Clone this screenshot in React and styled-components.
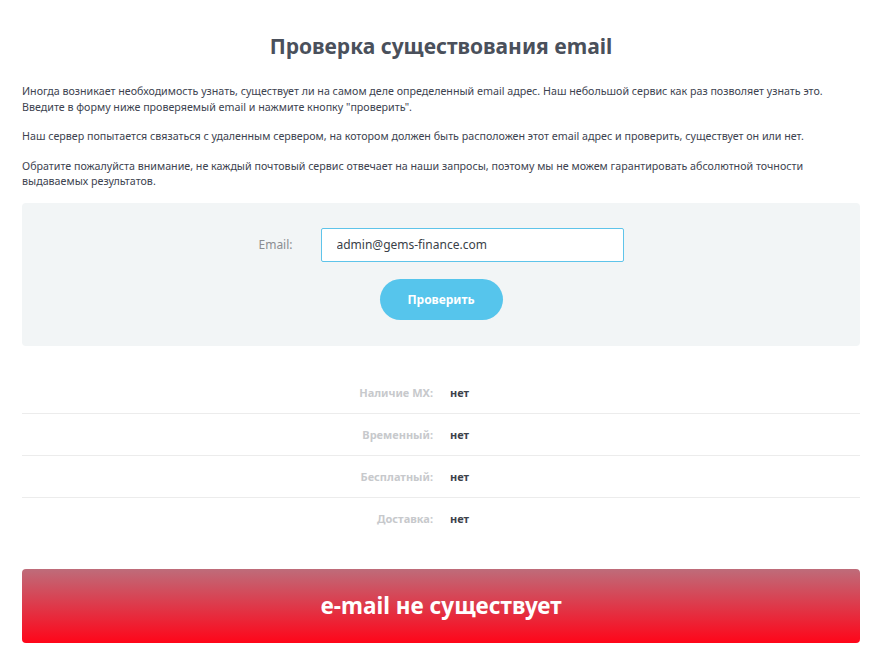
import React from "react";
import styled, { createGlobalStyle } from "styled-components";

const GlobalStyle = createGlobalStyle`
  body {
    margin: 0;
    background: #fff;
    font-family: "Noto Sans", "Open Sans", sans-serif;
  }
`;

const results = [
  { label: "Наличие MX:", value: "нет" },
  { label: "Временный:", value: "нет" },
  { label: "Бесплатный:", value: "нет" },
  { label: "Доставка:", value: "нет" },
];

const App = () => {
  return (
    <>
      <GlobalStyle />
      <Page>
        <Title>Проверка существования email</Title>
        <Text>
          Иногда возникает необходимость узнать, существует ли на самом деле
          определенный email адрес. Наш небольшой сервис как раз позволяет
          узнать это. Введите в форму ниже проверяемый email и нажмите кнопку
          "проверить".
        </Text>
        <Text>
          Наш сервер попытается связаться с удаленным сервером, на котором
          должен быть расположен этот email адрес и проверить, существует он
          или нет.
        </Text>
        <Text>
          Обратите пожалуйста внимание, не каждый почтовый сервис отвечает на
          наши запросы, поэтому мы не можем гарантировать абсолютной точности
          выдаваемых результатов.
        </Text>

        <FormBox>
          <Field>
            <Label>Email:</Label>
            <Input defaultValue="admin@gems-finance.com" />
          </Field>
          <Button>Проверить</Button>
        </FormBox>

        <Results>
          {results.map((r) => (
            <Row key={r.label}>
              <RowLabel>{r.label}</RowLabel>
              <RowValue>{r.value}</RowValue>
            </Row>
          ))}
        </Results>

        <Verdict>e-mail не существует</Verdict>
      </Page>
    </>
  );
};

const Page = styled.div`
  padding: 0 20px 16px 22px;
  display: flex;
  flex-direction: column;
`;

const Title = styled.h1`
  margin: 32px 0 24px;
  text-align: center;
  font-family: "Noto Sans", sans-serif;
  font-size: 21px;
  font-weight: 700;
  color: #4a505b;
`;

const Text = styled.p`
  margin: 0 0 14px;
  font-size: 10.7px;
  line-height: 15.5px;
  color: #3d4350;
`;

const FormBox = styled.div`
  margin-top: -1px;
  background: #f2f5f6;
  border-radius: 4px;
  height: 143px;
  display: flex;
  flex-direction: column;
  align-items: center;
  padding-top: 25px;
  box-sizing: border-box;
`;

const Field = styled.div`
  display: flex;
  align-items: center;
`;

const Label = styled.label`
  font-size: 12px;
  color: #8a8d91;
  width: 62px;
`;

const Input = styled.input`
  width: 303px;
  height: 34px;
  box-sizing: border-box;
  border: 1px solid #5fc4ea;
  border-radius: 2px;
  background: #fff;
  padding: 0 15px;
  font-family: "Noto Sans", sans-serif;
  font-size: 12px;
  color: #3a3f48;
  outline: none;
`;

const Button = styled.button`
  margin-top: 17px;
  width: 123px;
  height: 41px;
  border: none;
  border-radius: 21px;
  background: #56c5ec;
  color: #fff;
  font-family: "Noto Sans", sans-serif;
  font-size: 12px;
  font-weight: 700;
`;

const Results = styled.div`
  margin-top: 26px;
  display: flex;
  flex-direction: column;
`;

const Row = styled.div`
  height: 42px;
  display: grid;
  grid-template-columns: 411px 1fr;
  column-gap: 17px;
  align-items: center;
  border-bottom: 1px solid #ececec;
  box-sizing: border-box;
  &:last-child {
    border-bottom: none;
  }
`;

const RowLabel = styled.div`
  text-align: right;
  font-size: 11px;
  font-weight: 700;
  color: #c7c9cc;
`;

const RowValue = styled.div`
  font-size: 11px;
  font-weight: 700;
  color: #3d424b;
`;

const Verdict = styled.div`
  margin-top: 29px;
  height: 74px;
  border-radius: 4px;
  background: linear-gradient(to bottom, #be6c7a, #ff0519);
  display: flex;
  align-items: center;
  justify-content: center;
  color: #fff;
  font-family: "Noto Sans", sans-serif;
  font-size: 22.5px;
  font-weight: 700;
`;

export default App;
